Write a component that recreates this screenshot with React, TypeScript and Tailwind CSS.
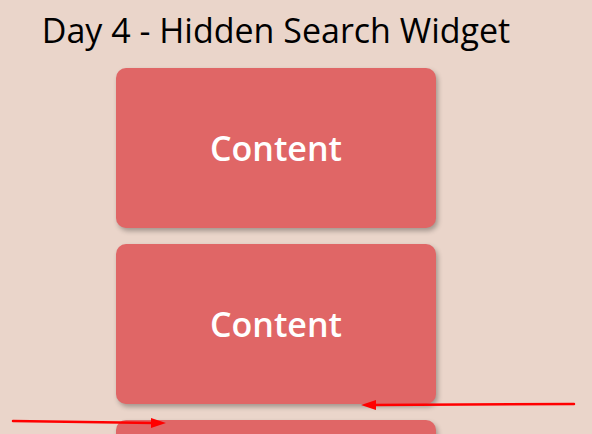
export default function App() {
  return (
    <div className="relative h-[434px] w-[592px] overflow-hidden bg-[#ead5ca] font-['Open_Sans',sans-serif]">
      <div className="flex w-[552px] flex-col items-center">
        <h1 className="mt-[6px] text-[34px] leading-[48px] font-normal text-black">
          Day 4 - Hidden Search Widget
        </h1>
        <div className="mt-[14px] flex flex-col gap-4">
          {[0, 1, 2].map((i) => (
            <div
              key={i}
              className="flex h-[160px] w-[320px] items-center justify-center rounded-[10px] bg-[#e06666] shadow-[2px_3px_5px_rgba(0,0,0,0.3)]"
            >
              <span className="text-[34px] font-semibold text-white">Content</span>
            </div>
          ))}
        </div>
      </div>

      {/* annotation arrows */}
      <svg className="pointer-events-none absolute inset-0" width="592" height="434">
        <line x1="574" y1="404" x2="372" y2="405" stroke="#ff0000" strokeWidth="2.5" strokeLinecap="round" />
        <polygon points="361,405 376,400 376,410" fill="#ff0000" />
        <line x1="13" y1="421" x2="154" y2="423" stroke="#ff0000" strokeWidth="2.5" strokeLinecap="round" />
        <polygon points="166,423 151,418 151,428" fill="#ff0000" />
      </svg>
    </div>
  );
}
